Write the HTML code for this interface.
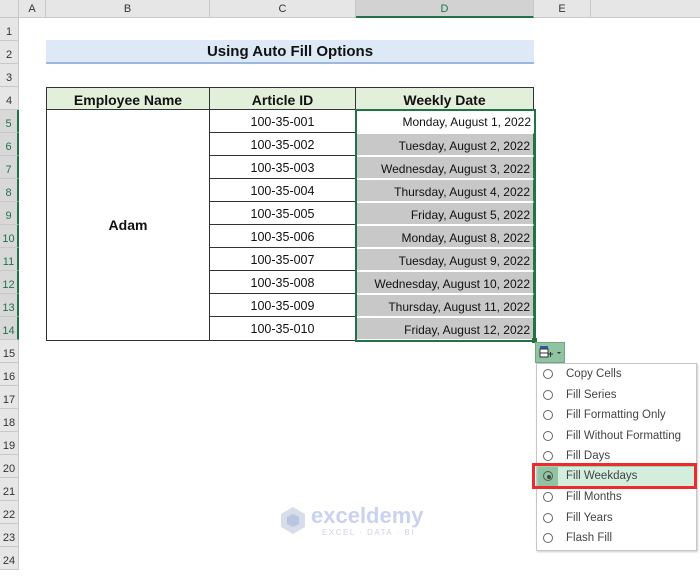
<!DOCTYPE html>
<html><head><meta charset="utf-8"><style>
*{margin:0;padding:0;box-sizing:border-box}
body{width:700px;height:553px;overflow:hidden;background:#fff;font-family:"Liberation Sans",sans-serif;position:relative}
.a{position:absolute}
.ch{position:absolute;top:0;height:18px;background:#e6e6e6;border-right:1px solid #c8c8c8;border-bottom:1px solid #c8c8c8;font-size:11px;color:#333;text-align:center;line-height:18px}
.rh{position:absolute;left:0;width:19px;height:23px;background:#e6e6e6;border-bottom:1px solid #c8c8c8;border-right:1px solid #c8c8c8;font-size:11px;color:#333;text-align:center;line-height:29px}
.rh.s{color:#217346;border-right:2px solid #217346;background:#d8d8d8}
.c{position:absolute;height:23px;font-size:12.5px;color:#111;line-height:24px;border-bottom:1px solid #333;border-right:1px solid #333}
.id{left:210px;width:146px;text-align:center}
.d{left:356px;width:178px;text-align:right;padding-right:3px;font-size:12px}
.g{background:#c8c8c8;border:1px solid #fff;border-left:1px solid #217346;border-right:1px solid #217346}
.mi{position:absolute;left:537px;width:158px;height:20.5px;font-size:11.5px;color:#444;line-height:21px}
.mi i{position:absolute;left:6px;top:5px;width:10px;height:10px;border:1px solid #666;border-radius:50%}
.mi span{position:absolute;left:29px}
</style></head><body>
<div class="ch" style="left:0;width:19px"></div>
<div class="ch" style="left:19px;width:27px">A</div>
<div class="ch" style="left:46px;width:164px">B</div>
<div class="ch" style="left:210px;width:146px">C</div>
<div class="ch" style="left:356px;width:178px;background:#d2d2d2;color:#217346;border-bottom:2px solid #217346">D</div>
<div class="ch" style="left:534px;width:57px">E</div>
<div class="ch" style="left:591px;width:109px;border-right:none"></div>

<div class="rh" style="top:18px">1</div>
<div class="rh" style="top:41px">2</div>
<div class="rh" style="top:64px">3</div>
<div class="rh" style="top:87px">4</div>
<div class="rh s" style="top:110px">5</div>
<div class="rh s" style="top:133px">6</div>
<div class="rh s" style="top:156px">7</div>
<div class="rh s" style="top:179px">8</div>
<div class="rh s" style="top:202px">9</div>
<div class="rh s" style="top:225px">10</div>
<div class="rh s" style="top:248px">11</div>
<div class="rh s" style="top:271px">12</div>
<div class="rh s" style="top:294px">13</div>
<div class="rh s" style="top:317px">14</div>
<div class="rh" style="top:340px">15</div>
<div class="rh" style="top:363px">16</div>
<div class="rh" style="top:386px">17</div>
<div class="rh" style="top:409px">18</div>
<div class="rh" style="top:432px">19</div>
<div class="rh" style="top:455px">20</div>
<div class="rh" style="top:478px">21</div>
<div class="rh" style="top:501px">22</div>
<div class="rh" style="top:524px">23</div>
<div class="rh" style="top:547px">24</div>

<div class="a" style="left:46px;top:40px;width:488px;height:24px;background:#dde9f6;border-bottom:2px solid #9bb8de;text-align:center;font-weight:bold;font-size:15px;line-height:24px;color:#111">Using Auto Fill Options</div>

<div class="a" style="left:46px;top:87px;width:488px;height:23px;background:#e2efda;border:1px solid #333"></div>
<div class="c" style="left:46px;top:87px;width:164px;text-align:center;font-weight:bold;font-size:14px;border-top:1px solid #333;border-left:1px solid #333">Employee Name</div>
<div class="c" style="left:210px;top:87px;width:146px;text-align:center;font-weight:bold;font-size:14px;border-top:1px solid #333">Article ID</div>
<div class="c" style="left:356px;top:87px;width:178px;text-align:center;font-weight:bold;font-size:14px;border-top:1px solid #333">Weekly Date</div>

<div class="c" style="left:46px;top:110px;width:164px;height:231px;border-left:1px solid #333;line-height:231px;text-align:center;font-weight:bold;font-size:14px">Adam</div>

<div class="c id" style="top:110px">100-35-001</div>
<div class="c id" style="top:133px">100-35-002</div>
<div class="c id" style="top:156px">100-35-003</div>
<div class="c id" style="top:179px">100-35-004</div>
<div class="c id" style="top:202px">100-35-005</div>
<div class="c id" style="top:225px">100-35-006</div>
<div class="c id" style="top:248px">100-35-007</div>
<div class="c id" style="top:271px">100-35-008</div>
<div class="c id" style="top:294px">100-35-009</div>
<div class="c id" style="top:317px;height:24px">100-35-010</div>

<div class="c d" style="top:110px;border:none">Monday, August 1, 2022</div>
<div class="c d g" style="top:133px">Tuesday, August 2, 2022</div>
<div class="c d g" style="top:156px">Wednesday, August 3, 2022</div>
<div class="c d g" style="top:179px">Thursday, August 4, 2022</div>
<div class="c d g" style="top:202px">Friday, August 5, 2022</div>
<div class="c d g" style="top:225px">Monday, August 8, 2022</div>
<div class="c d g" style="top:248px">Tuesday, August 9, 2022</div>
<div class="c d g" style="top:271px">Wednesday, August 10, 2022</div>
<div class="c d g" style="top:294px">Thursday, August 11, 2022</div>
<div class="c d g" style="top:317px">Friday, August 12, 2022</div>
<div class="a" style="left:355px;top:109px;width:181px;height:233px;border:2px solid #217346"></div>
<div class="a" style="left:532px;top:338px;width:5px;height:5px;background:#217346"></div>

<div class="a" style="left:535px;top:342px;width:30px;height:21px;background:#8fc3a2;border:1px solid #6fa882"></div>
<svg class="a" style="left:539px;top:345px" width="24" height="16"><rect x="1" y="1" width="8" height="3" fill="#2f5ea8"/><rect x="1" y="4" width="8" height="8" fill="#fff" stroke="#333" stroke-width="1"/><line x1="1" y1="8" x2="9" y2="8" stroke="#333"/><line x1="9" y1="9" x2="14" y2="9" stroke="#333"/><line x1="11.5" y1="7" x2="11.5" y2="12" stroke="#333"/><path d="M18 7 L22 7 L20 9 Z" fill="#333"/></svg>

<div class="a" style="left:536px;top:363px;width:161px;height:188px;background:#fff;border:1px solid #c6c6c6;box-shadow:1px 1px 2px rgba(0,0,0,.2)"></div>
<div class="mi" style="top:364px"><i></i><span>Copy Cells</span></div>
<div class="mi" style="top:384.5px"><i></i><span>Fill Series</span></div>
<div class="mi" style="top:405px"><i></i><span>Fill Formatting Only</span></div>
<div class="mi" style="top:425.5px"><i></i><span>Fill Without Formatting</span></div>
<div class="mi" style="top:446px"><i></i><span>Fill Days</span></div>
<div class="mi" style="top:466px;background:#d3eedd;border:1px solid #9cd3b0"><b style="position:absolute;left:0;top:0;width:20px;height:19px;background:#8fc3a2"></b><i style="left:5px;top:4px;border-color:#555"></i><b style="position:absolute;left:9px;top:8px;width:4px;height:4px;border-radius:50%;background:#444"></b><span style="left:28px;top:-1px">Fill Weekdays</span></div>
<div class="mi" style="top:487px"><i></i><span>Fill Months</span></div>
<div class="mi" style="top:507.5px"><i></i><span>Fill Years</span></div>
<div class="mi" style="top:528px"><i></i><span>Flash Fill</span></div>
<div class="a" style="left:532px;top:463px;width:165px;height:26px;border:3px solid #ee2b2b"></div>

<svg class="a" style="left:278px;top:505px" width="30" height="30"><path d="M15 2 L27 9 L27 22 L15 29 L3 22 L3 9 Z" fill="#d7dde9"/><path d="M15 9 L21 12 L21 19 L15 22 L9 19 L9 12Z" fill="#b9c6e2"/></svg>
<div class="a" style="left:311px;top:503px;font-size:22px;font-weight:bold;color:#c9d3ef">exceldemy</div>
<div class="a" style="left:322px;top:528px;font-size:8px;letter-spacing:1.5px;color:#cdd3e0">EXCEL · DATA · BI</div>
</body></html>
